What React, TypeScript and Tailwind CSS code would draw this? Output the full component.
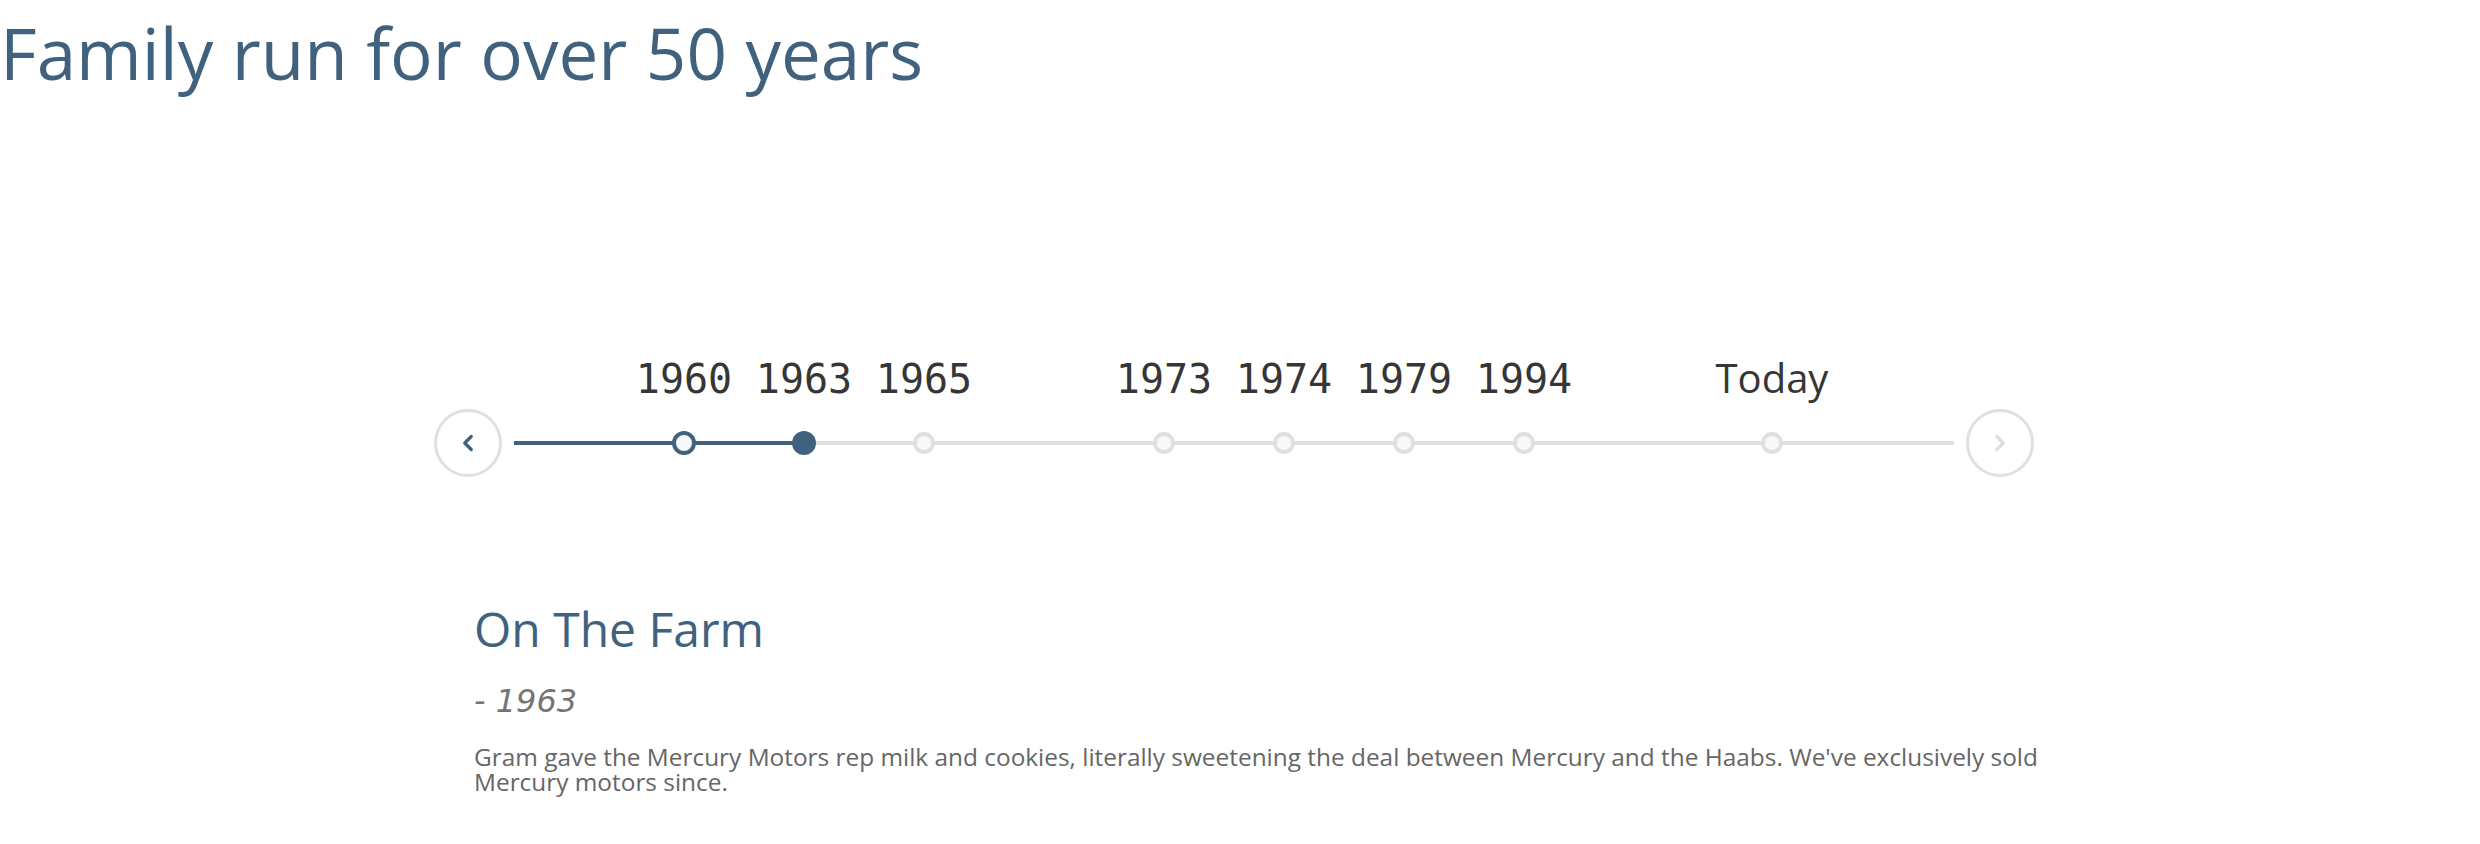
import { ChevronLeft, ChevronRight } from 'lucide-react'

type Stop = { label: string; x: number; year?: boolean }

const stops: Stop[] = [
  { label: '1960', x: 170, year: true },
  { label: '1963', x: 290, year: true },
  { label: '1965', x: 410, year: true },
  { label: '1973', x: 650, year: true },
  { label: '1974', x: 770, year: true },
  { label: '1979', x: 890, year: true },
  { label: '1994', x: 1010, year: true },
  { label: 'Today', x: 1258 },
]

const activeIndex = 1

export default function App() {
  const active = stops[activeIndex]

  return (
    <div className="w-full h-[844px] bg-white overflow-hidden font-['Open_Sans',sans-serif]">
      <h1 className="pt-[11px] text-[71px] leading-[84px] text-[#41627e] font-normal">
        Family run for over 50 years
      </h1>

      <div className="ml-[434px] w-[1600px] mt-[314px] flex items-center">
        <button className="w-[68px] h-[68px] rounded-full border-[3px] border-[#e0e0e0] flex items-center justify-center text-[#41627e] shrink-0">
          <ChevronLeft size={26} strokeWidth={3} />
        </button>

        <div className="relative flex-1 mx-3 h-[68px]">
          <div className="absolute left-0 right-0 top-[32px] h-[4px] bg-[#e0e0e0]" />
          <div
            className="absolute left-0 top-[32px] h-[4px] bg-[#41627e]"
            style={{ width: active.x }}
          />

          {stops.map((s, i) => {
            const past = i < activeIndex
            const current = i === activeIndex
            return (
              <div key={s.label}>
                <span
                  className={
                    s.year
                      ? "absolute top-[-50px] -translate-x-1/2 text-[40px] leading-[40px] text-[#363636] font-['DejaVu_Sans_Mono',monospace] whitespace-nowrap"
                      : "absolute top-[-51px] -translate-x-1/2 text-[40px] leading-[40px] text-[#363636] whitespace-nowrap"
                  }
                  style={{ left: s.x }}
                >
                  {s.label}
                </span>
                <span
                  className={
                    current
                      ? 'absolute top-[22px] w-[24px] h-[24px] -translate-x-1/2 rounded-full bg-[#41627e]'
                      : past
                        ? 'absolute top-[22px] w-[24px] h-[24px] -translate-x-1/2 rounded-full bg-[#f8f8f8] border-[4px] border-[#41627e]'
                        : 'absolute top-[23px] w-[22px] h-[22px] -translate-x-1/2 rounded-full bg-[#f8f8f8] border-[4px] border-[#e0e0e0]'
                  }
                  style={{ left: s.x }}
                />
              </div>
            )
          })}
        </div>

        <button className="w-[68px] h-[68px] rounded-full border-[3px] border-[#e0e0e0] flex items-center justify-center text-[#dedede] shrink-0">
          <ChevronRight size={26} strokeWidth={3} />
        </button>
      </div>

      <div className="ml-[474px] w-[1590px] mt-[128px]">
        <h2 className="text-[48px] leading-[48px] text-[#41627e] font-normal">On The Farm</h2>
        <p className="mt-[32px] text-[32px] leading-[32px] italic text-[#757575] font-['DejaVu_Sans',sans-serif]">
          - 1963
        </p>
        <p className="mt-[27px] text-[24.4px] leading-[25px] text-[#666666]">
          Gram gave the Mercury Motors rep milk and cookies, literally sweetening the deal between Mercury and
          the Haabs. We've exclusively sold Mercury motors since.
        </p>
      </div>
    </div>
  )
}
